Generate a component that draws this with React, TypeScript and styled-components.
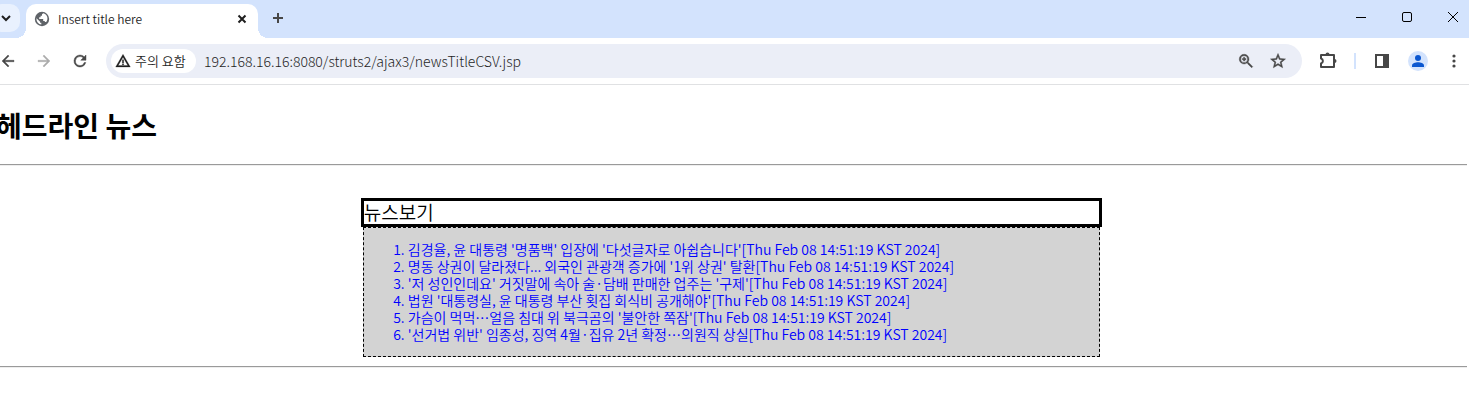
import React from "react";
import styled, { createGlobalStyle } from "styled-components";

const GlobalStyle = createGlobalStyle`
  * { box-sizing: border-box; }
  body {
    margin: 0;
    background: #fff;
    color: #000;
    font-family: "Noto Sans CJK KR", "Noto Sans", sans-serif;
    font-weight: 350;
    overflow: hidden;
  }
  button { border: 0; padding: 0; background: none; color: inherit; font: inherit; }
`;

const Window = styled.div`
  overflow: hidden;
`;

const TabStrip = styled.header`
  display: flex;
  align-items: flex-start;
  height: 38px;
  background: #d3e3fd;
  margin-right: -7px;
`;

const TabSearch = styled.button`
  display: flex;
  align-items: center;
  justify-content: center;
  width: 28px;
  height: 28px;
  margin: 4px 6px 0 -8px;
  border-radius: 10px;
  background: #e9f1fe;
  color: #1f1f1f;
`;

const Tab = styled.div`
  position: relative;
  display: flex;
  align-items: center;
  width: 232px;
  height: 34px;
  margin-top: 4px;
  padding: 0 8px 4px;
  gap: 8px;
  border-radius: 10px 10px 0 0;
  background: #fff;
  color: #1f1f1f;
  font-size: 12px;
  line-height: 16px;

  &::before, &::after {
    content: "";
    position: absolute;
    bottom: 0;
    width: 10px;
    height: 10px;
  }
  &::before {
    right: 100%;
    background: radial-gradient(circle at 0 0, transparent 10px, #fff 10px);
  }
  &::after {
    left: 100%;
    background: radial-gradient(circle at 100% 0, transparent 10px, #fff 10px);
  }
`;

const TabTitle = styled.span`
  flex: 1;
`;

const SmallButton = styled.button`
  display: flex;
  align-items: center;
  justify-content: center;
  width: 16px;
  height: 16px;
`;

const NewTab = styled.button`
  display: flex;
  align-items: center;
  justify-content: center;
  width: 28px;
  height: 28px;
  margin: 4px 0 0 6px;
  color: #474747;
`;

const WindowControls = styled.div`
  display: flex;
  margin-left: auto;
`;

const WindowButton = styled.button`
  display: flex;
  align-items: center;
  justify-content: center;
  width: 46px;
  height: 34px;
`;

const Toolbar = styled.nav`
  display: flex;
  align-items: center;
  height: 46px;
  margin: 0 -3px 0 -10px;
`;

const ToolButton = styled.button<{ $faded?: boolean }>`
  display: flex;
  flex: none;
  align-items: center;
  justify-content: center;
  width: 36px;
  height: 34px;
  color: ${(p) => (p.$faded ? "#ababab" : "#474747")};
`;

const AddressBar = styled.div`
  display: flex;
  flex: 1;
  align-items: center;
  height: 34px;
  margin: 0 8px;
  padding: 0 8px 0 5px;
  border-radius: 17px;
  background: #ebeef7;
`;

const SecurityChip = styled.button`
  display: flex;
  align-items: center;
  gap: 4px;
  width: 85px;
  height: 24px;
  padding-left: 4px;
  border-radius: 12px;
  background: #fff;
  color: #1f1f1f;
  font-size: 13px;
  line-height: 16px;
  white-space: nowrap;
`;

const AddressInput = styled.input`
  flex: 1;
  min-width: 0;
  margin-left: 8px;
  padding: 0;
  border: 0;
  outline: 0;
  background: none;
  color: #1f1f1f;
  font-family: inherit;
  font-weight: 300;
  font-size: 14px;
  line-height: 20px;
`;

const BarButton = styled.button`
  display: flex;
  align-items: center;
  justify-content: center;
  width: 32px;
  height: 28px;
  color: #474747;
`;

const Divider = styled.span`
  width: 2px;
  height: 16px;
  margin: 0 8px;
  background: #d3e3fd;
`;

const Page = styled.main`
  margin: 0 2px 0 -4px;
  padding-top: 23px;
`;

const ToolbarEdge = styled.div`
  height: 1px;
  background: #e0e1e3;
`;

const Heading = styled.h1`
  margin: 0 0 22px;
  font-size: 28px;
  line-height: 34px;
  font-weight: 700;
`;

const Rule = styled.hr`
  height: 2px;
  margin: 0;
  border: 0;
  border-top: 1px solid #9a9a9a;
  background: #eee;
`;

const News = styled.section`
  display: flex;
  flex-direction: column;
  align-items: center;
  padding: 32px 0 9px;
`;

const NewsTitle = styled.div`
  box-sizing: content-box;
  width: 50%;
  padding-bottom: 2px;
  border: 3px solid #000;
  font-size: 19px;
  line-height: 21px;
`;

const NewsBody = styled.div`
  box-sizing: content-box;
  width: 50%;
  border: 1px dashed #000;
  background: #d3d3d3;
`;

const NewsList = styled.ol`
  margin: 0;
  padding: 13px 0 13px 44px;
  color: #00f;
  font-size: 14px;
  line-height: 17px;
`;

const stamp = "[Thu Feb 08 14:51:19 KST 2024]";

const headlines = [
  "김경율, 윤 대통령 '명품백' 입장에 '다섯글자로 아쉽습니다'",
  "명동 상권이 달라졌다... 외국인 관광객 증가에 '1위 상권' 탈환",
  "'저 성인인데요' 거짓말에 속아 술·담배 판매한 업주는 '구제'",
  "법원 '대통령실, 윤 대통령 부산 횟집 회식비 공개해야'",
  "가슴이 먹먹…얼음 침대 위 북극곰의 '불안한 쪽잠'",
  "'선거법 위반' 임종성, 징역 4월·집유 2년 확정…의원직 상실",
];

function Glyph({ d, size, bold = 0 }: { d: string; size: number; bold?: number }) {
  return (
    <svg
      width={size}
      height={size}
      viewBox="0 0 24 24"
      fill="currentColor"
      stroke="currentColor"
      strokeWidth={bold}
      aria-hidden="true"
    >
      <path fillRule="evenodd" d={d} />
    </svg>
  );
}

function Lines({ d, size, width = 2 }: { d: string; size: number; width?: number }) {
  return (
    <svg
      width={size}
      height={size}
      viewBox={`0 0 ${size} ${size}`}
      fill="none"
      stroke="currentColor"
      strokeWidth={width}
      aria-hidden="true"
    >
      <path d={d} />
    </svg>
  );
}

export default function App() {
  return (
    <Window>
      <GlobalStyle />
      <TabStrip>
        <TabSearch aria-label="Search tabs">
          <Lines size={16} d="M4 6l4 4 4-4" />
        </TabSearch>
        <Tab>
          <svg width="16" height="16" viewBox="0 0 16 16" aria-hidden="true">
            <circle cx="8" cy="8" r="7.200" fill="#5f6368" />
            <path
              d="M9.3 2.2 8 3.2v1.6H6.600v1.500H5.200v1.600h4v2h1.600v1.200h1.400A5.600 5.600 0 0 0 9.300 2.200ZM2.500 7.300l3.600 3.400v1h1.200v1.800A5.600 5.600 0 0 1 2.500 7.300Z"
              fill="#fff"
            />
          </svg>
          <TabTitle>Insert title here</TabTitle>
          <SmallButton aria-label="Close tab">
            <Lines size={16} width={2} d="M4.500 4.500l7 7M11.500 4.500l-7 7" />
          </SmallButton>
        </Tab>
        <NewTab aria-label="New tab">
          <Lines size={16} d="M8 3v10M3 8h10" />
        </NewTab>
        <WindowControls>
          <WindowButton aria-label="Minimize">
            <Lines size={12} width={1} d="M1 6.500h10" />
          </WindowButton>
          <WindowButton aria-label="Maximize">
            <svg width="12" height="12" viewBox="0 0 12 12" fill="none" stroke="#000" aria-hidden="true">
              <rect x="1.500" y="1.500" width="9" height="9" rx="1.500" />
            </svg>
          </WindowButton>
          <WindowButton aria-label="Close">
            <Lines size={12} width={1} d="M1 1l10 10M11 1L1 11" />
          </WindowButton>
        </WindowControls>
      </TabStrip>

      <Toolbar>
        <ToolButton aria-label="Back">
          <Glyph size={18} bold={0.5} d="M20 11H7.830l5.590-5.590L12 4l-8 8 8 8 1.410-1.410L7.830 13H20v-2z" />
        </ToolButton>
        <ToolButton aria-label="Forward" $faded>
          <Glyph size={18} bold={0.5} d="M12 4l-1.410 1.410L16.170 11H4v2h12.170l-5.580 5.590L12 20l8-8z" />
        </ToolButton>
        <ToolButton aria-label="Reload">
          <Glyph
            size={18}
            bold={0.6}
            d="M17.650 6.350A7.960 7.960 0 0 0 12 4a8 8 0 1 0 7.730 10h-2.080A6 6 0 1 1 12 6c1.660 0 3.140.69 4.220 1.780L13 11h7V4l-2.350 2.350z"
          />
        </ToolButton>
        <AddressBar>
          <SecurityChip>
            <Glyph
              size={16}
              bold={0.4}
              d="M1 21h22L12 2 1 21zm3.800-2.200L12 6.300l7.200 12.500H4.800zM11 10h2v5h-2zM11 16h2v2h-2z"
            />
            주의 요함
          </SecurityChip>
          <AddressInput aria-label="Address" defaultValue="192.168.16.16:8080/struts2/ajax3/newsTitleCSV.jsp" />
          <BarButton aria-label="Zoom">
            <Glyph
              size={18}
              bold={0.5}
              d="M15.500 14h-.79l-.28-.27A6.470 6.470 0 0 0 16 9.500 6.500 6.500 0 1 0 9.500 16c1.610 0 3.090-.59 4.230-1.570l.27.28v.79l5.500 5.500 1.500-1.500-5.500-5.500zm-6 0a4.500 4.500 0 1 1 0-9 4.500 4.500 0 0 1 0 9zM8.700 7h1.600v1.700H12v1.600h-1.700V12H8.700v-1.700H7V8.700h1.700z"
            />
          </BarButton>
          <BarButton aria-label="Bookmark">
            <Glyph
              size={18}
              bold={0.6}
              d="M22 9.240l-7.190-.62L12 2 9.190 8.630 2 9.240l5.460 4.730L5.820 21 12 17.270 18.180 21l-1.630-7.030L22 9.240zM12 15.400l-3.760 2.270 1-4.280-3.320-2.880 4.380-.38L12 6.100l1.710 4.040 4.380.38-3.320 2.880 1 4.280L12 15.400z"
            />
          </BarButton>
        </AddressBar>
        <ToolButton aria-label="Extensions">
          <svg width="20" height="20" viewBox="0 0 20 20" fill="none" aria-hidden="true">
            <path
              d="M3 4h13v12H3v-3.500a2.600 2.600 0 0 0 0-5z"
              stroke="currentColor"
              strokeWidth="2"
              strokeLinejoin="round"
            />
            <path d="M7.500 3.500a2 2 0 0 1 4 0zM16.500 8a2 2 0 0 1 0 4z" fill="currentColor" />
          </svg>
        </ToolButton>
        <Divider />
        <ToolButton aria-label="Side panel">
          <svg width="16" height="16" viewBox="0 0 16 16" aria-hidden="true">
            <rect x="2" y="2" width="12" height="12" fill="none" stroke="currentColor" strokeWidth="2" />
            <path d="M9 2h5v12H9z" fill="currentColor" />
          </svg>
        </ToolButton>
        <ToolButton aria-label="Profile">
          <svg width="20" height="20" viewBox="0 0 20 20" aria-hidden="true">
            <circle cx="10" cy="10" r="10" fill="#d3e3fd" />
            <circle cx="10" cy="7" r="3" fill="#0b57d0" />
            <path d="M4 16v-1.500C4 12.300 7.500 11.200 10 11.200s6 1.100 6 3.300V16z" fill="#0b57d0" />
          </svg>
        </ToolButton>
        <ToolButton aria-label="Menu">
          <svg width="16" height="16" viewBox="0 0 16 16" fill="currentColor" aria-hidden="true">
            <circle cx="8" cy="3" r="1.600" />
            <circle cx="8" cy="8" r="1.600" />
            <circle cx="8" cy="13" r="1.600" />
          </svg>
        </ToolButton>
      </Toolbar>
      <ToolbarEdge />

      <Page>
        <Heading>헤드라인 뉴스</Heading>
        <Rule />
        <News>
          <NewsTitle>뉴스보기</NewsTitle>
          <NewsBody>
            <NewsList>
              {headlines.map((text) => (
                <li key={text}>
                  {text}
                  {stamp}
                </li>
              ))}
            </NewsList>
          </NewsBody>
        </News>
        <Rule />
      </Page>
    </Window>
  );
}
